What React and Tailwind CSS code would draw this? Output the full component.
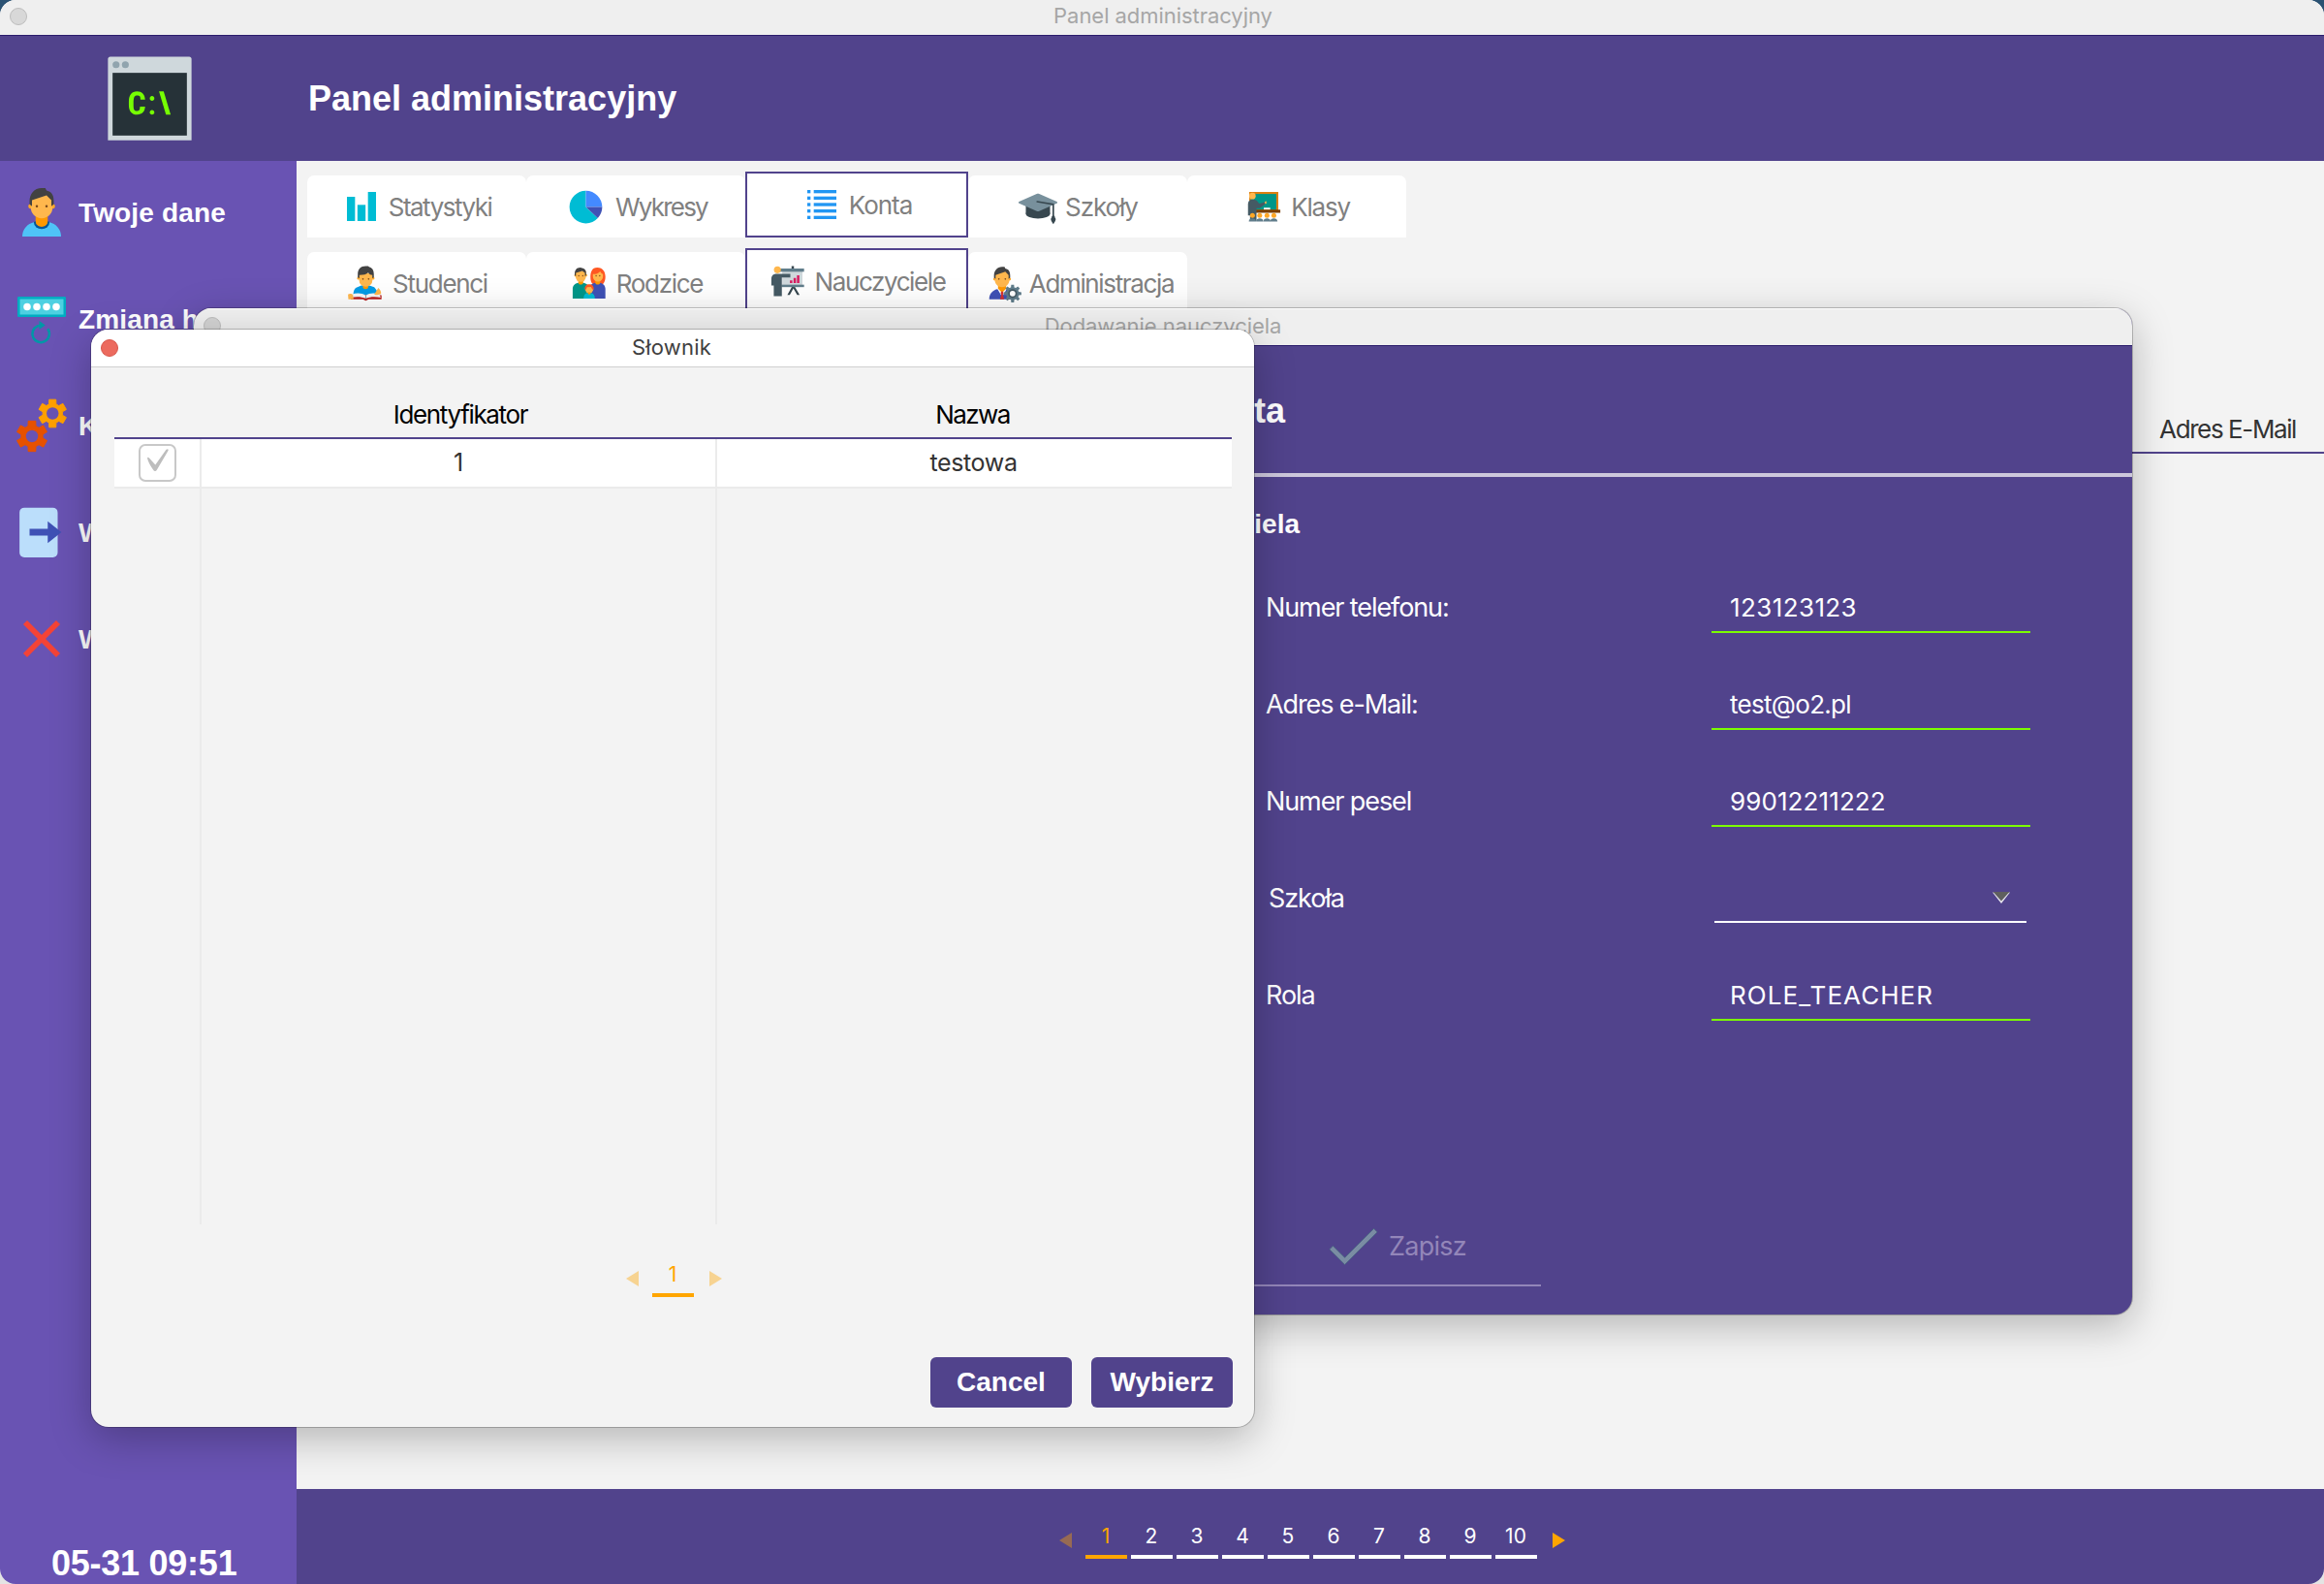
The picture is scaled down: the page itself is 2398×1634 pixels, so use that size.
import React from "react";
import { FcBarChart, FcPieChart, FcList, FcGraduationCap, FcCommandLine } from "react-icons/fc";

const gearPath = (cx, cy, outer, body, teeth, halfTip, halfBase) => {
  const pts = [];
  const step = (Math.PI * 2) / teeth;
  for (let i = 0; i < teeth; i++) {
    const a = i * step - Math.PI / 2;
    [
      [body, -halfBase],
      [outer, -halfTip],
      [outer, halfTip],
      [body, halfBase],
    ].forEach(([r, d]) => pts.push(`${(cx + r * Math.cos(a + d)).toFixed(2)},${(cy + r * Math.sin(a + d)).toFixed(2)}`));
  }
  return `M${pts.join("L")}Z`;
};

const Svg = ({ size = 40, children, className = "" }) => (
  <svg width={size} height={size} viewBox="0 0 48 48" className={"shrink-0 " + className}>
    {children}
  </svg>
);

const Head = () => (
  <>
    <circle fill="#FFA726" cx="33" cy="19" r="2" />
    <circle fill="#FFA726" cx="15" cy="19" r="2" />
    <path fill="#FFB74D" d="M33,13c0-7.6-18-5-18,0c0,1.1,0,5.9,0,7c0,5,4,9,9,9s9-4,9-9C33,18.9,33,14.1,33,13z" />
    <path fill="#424242" d="M24,4c-6.1,0-10,4.9-10,11c0,0.8,0,2.3,0,2.3l2,1.7v-5l12-4l4,4v5l2-1.7c0,0,0-1.5,0-2.3c0-4-1-8-6-9l-1-2H24z" />
    <circle fill="#784719" cx="28" cy="19" r="1" />
    <circle fill="#784719" cx="20" cy="19" r="1" />
  </>
);

const UserIcon = () => (
  <Svg size={60}>
    <path fill="#4FC3F7" d="M30,32h-12C12,33.500,8,38,8,44h32C40,38,36,33.500,30,32z" />
    <path fill="#01579B" d="M17.500,32a6.500,5.800 0 0 0 13,0l-2-1h-9z" />
    <path fill="#FF9800" d="M19,25h10v6.500a5,4.500 0 0 1-10,0z" />
    <Head />
  </Svg>
);

const PasswordIcon = () => (
  <Svg size={60}>
    <rect x="4" y="5.600" width="40" height="16.800" rx="1" fill="#00ACC1" />
    <rect x="6" y="7.600" width="36" height="12.800" fill="#4DD0E1" />
    {[12, 20, 28, 36].map((x) => (
      <circle key={x} cx={x} cy="14" r="3" fill="#fff" />
    ))}
    <path d="M29,32.200A7,7 0 1 1 20.500,29.900L24,29.200" fill="none" stroke="#0097A7" strokeWidth="2" />
    <path d="M22,25.600v7l5-3.500z" fill="#0097A7" />
  </Svg>
);

const GearsIcon = () => (
  <Svg size={60}>
    <path d={gearPath(16, 32.8, 12.9, 9, 6, 0.24, 0.36)} fill="#E65100" stroke="#E65100" strokeWidth="0.800" strokeLinejoin="round" />
    <circle cx="16" cy="32.800" r="5" fill="#6953B3" />
    <path d={gearPath(33, 14, 11.8, 8.2, 6, 0.24, 0.36)} fill="#FFA000" stroke="#FFA000" strokeWidth="0.800" strokeLinejoin="round" />
    <circle cx="33" cy="14" r="5" fill="#6953B3" />
  </Svg>
);

const ExportIcon = () => (
  <Svg size={60}>
    <rect x="5.700" y="3.700" width="31.500" height="41" rx="4" fill="#BBDEFB" />
    <path d="M14,21.200h15v-6.200l11.300,9l-11.300,9v-6.200h-15z" fill="#3F51B5" />
  </Svg>
);

const CloseIcon = () => (
  <Svg size={60}>
    <path d="M10.400,10.400L37.600,37.600M37.600,10.400L10.400,37.600" stroke="#F44336" strokeWidth="4.600" />
  </Svg>
);

const StudentIcon = () => (
  <Svg>
    <path fill="#039BE5" d="M19,27l-7,3c-2,2-3,5-3,9h31c-1-5-3-8-5-10l-6-2z" />
    <path fill="#FF9800" d="M21,24h6.500v6c-2,2-4.500,2-6.500,0z" />
    <circle fill="#FFA726" cx="15.500" cy="18" r="1.800" />
    <circle fill="#FFA726" cx="33.500" cy="18" r="1.800" />
    <path fill="#FFB74D" d="M32.800,12h-16.600v8a8.300,8.600 0 0 0 16.600,0z" />
    <path fill="#424242" d="M24.500,3c-6.500,0-9.900,4-9.900,10v4l2,1v-4c5,0,9-1,11-3c1,2,3,3,5,3v4l1.900-1v-4c0-5-2-8-6-9l-1-1z" />
    <circle fill="#784719" cx="21" cy="19" r="1" />
    <circle fill="#784719" cx="28" cy="19" r="1" />
    <path fill="#B71C1C" d="M6,39h38v5h-16l-3.500,2l-3.500-2h-15z" />
    <path fill="#F5F5F5" d="M7,38c6-2,13-2,17.500,1.500c4.500-3.500,11-3.500,17-1.500l1.500,4c-6-1.500-13-1.500-18.500,1c-6-2.500-12-2.500-18.500-1z" />
    <path fill="#78909C" d="M24,39.500h1v4h-1z" />
    <path fill="#FFB74D" d="M2.500,38c2-1.500,5-1,6,.5l1,5.500h-6.500zM35,38l5-8c2,2,3.500,4,3.500,7c-2,2-6,2-8.500,1z" />
  </Svg>
);

const FamilyIcon = () => (
  <Svg className="ml-px">
    <path fill="#009688" d="M3.500,43.200v-12c0-5,4-7,7-7.500h6c4,.5,7.500,3,7.500,8v11.500z" />
    <path fill="#FF9800" d="M10.500,20h6v4c-1,2.500-5,2.500-6,0z" />
    <circle fill="#FFA726" cx="7" cy="14.500" r="1.500" />
    <circle fill="#FFA726" cx="20" cy="14.500" r="1.500" />
    <path fill="#FFB74D" d="M7,9h13v7a6.500,6.500 0 0 1-13,0z" />
    <path fill="#424242" d="M13,4.800c-5,0-7,3.500-7,8v1.700l1.500,1v-4l8-2.500l3.200,2.500v4l1.500-1v-2c0-3.500-1-6-4-6.700z" />
    <path fill="#FF5722" d="M34,4.800c-7,0-8.500,6-8.500,12c0,4,1,7,3,8.500h12.500c2-2,3-5,3-9c0-6-3-11.500-10-11.500z" />
    <path fill="#3F51B5" d="M24,43.200v-11.500c0-5,3.500-7.500,7.500-8h6c3,.5,6.500,3,6.500,8v11.500z" />
    <path fill="#FF9800" d="M31.500,20h6v4c-1,2.500-5,2.500-6,0z" />
    <path fill="#FFB74D" d="M28.500,13c4,0,7-1,9-3.500c1,2,2.500,3,3.500,3.500v3a6.200,6.200 0 0 1-12.500,0z" />
    {[11, 16, 32.5, 37].map((x) => (
      <circle key={x} cx={x} cy="15" r="0.800" fill="#784719" />
    ))}
    <path fill="#00BCD4" d="M17,43.200c0-4,1.500-6.500,5-7h4c3.500.5,5,3,5,7z" />
    <circle cx="24" cy="31.500" r="5" fill="#FFB74D" />
    <path fill="#FF5722" d="M24,25.600c-4,0-5.600,2.500-5.600,6l1.600.6l1.200-3l5-.5l1.800,3.500l1.600-.6c0-3.500-1.600-6-5.600-6z" />
    <path fill="#FF9800" d="M22.500,35.500h3v2.500h-3z" />
  </Svg>
);

const TrainingIcon = () => (
  <Svg>
    <path fill="#37474F" d="M28.500,5.500h3v3h-3zM29,31h3.500l6,10h-3l-4.700-8l-4.500,8h-3z" />
    <rect x="17" y="12" width="25" height="17" fill="#CFD8DC" />
    <rect x="14" y="8.400" width="30" height="4" fill="#607D8B" />
    <rect x="16" y="28.400" width="28" height="3" fill="#607D8B" />
    <path fill="#D81B60" d="M26.500,23h3v3.500h-3zM31,20h3v6.500h-3zM35.200,16.800h3v9.700h-3z" />
    <path fill="#455A64" d="M10,15h17v4.500h-10.500v23h-10v-13h-3v-8c0-4,2-6.500,6.500-6.500z" />
    <circle cx="11" cy="10" r="4.300" fill="#FFB74D" />
  </Svg>
);

const AdminIcon = () => (
  <Svg className="ml-px">
    <path fill="#3F51B5" d="M18,31.500c-6,1.500-10,6-10,12.500h32c0-6.500-4-11-10-12.500z" />
    <path fill="#fff" d="M18,31l6,10l6-10z" />
    <path fill="#FF9800" d="M19,25h10v6l-5,5l-5-5z" />
    <path fill="#D32F2F" d="M24,34l2,2l-1,2l1.500,6h-5l1.500-6l-1-2z" />
    <Head />
    <path d={gearPath(37, 37, 11, 8, 8, 0.16, 0.26)} fill="#607D8B" />
    <circle cx="37" cy="37" r="5.500" fill="#455A64" />
    <circle cx="37" cy="37" r="3.500" fill="#fff" />
  </Svg>
);

const ClassIcon = () => (
  <Svg className="ml-px">
    <rect x="6" y="6" width="36" height="23" fill="#DB7F10" />
    <rect x="8" y="8.500" width="31.500" height="19.500" fill="#009688" />
    <rect x="10" y="32" width="30" height="7" fill="#fff" />
    <rect x="24" y="25.500" width="8" height="2.500" fill="#fff" />
    <rect x="14" y="28" width="30.500" height="3.800" fill="#7B3F00" />
    <path fill="#455A64" d="M9,15.500h3c4,0,5,4,7,5l6-2l1,2.500l-7,5h-4v16h-8v-7h-2.500v-14c0-3,2-5.500,4.500-5.500z" />
    <path fill="#FFB74D" d="M25,18.500l2-1.500l.500,3l-1.500,1z" />
    <circle cx="10" cy="11" r="4" fill="#FFB74D" />
    {[10, 19, 28, 36.5].map((x) => (
      <g key={x}>
        <circle cx={x} cy="35" r="3" fill="#FFA726" />
        <path d={`M${x - 4.5},42.500c0-5,9-5,9,0z`} fill="#607D8B" />
      </g>
    ))}
  </Svg>
);

const tabsTop = [
  { label: "Statystyki", icon: <FcBarChart size={40} />, track: "tracking-[-1.5px]" },
  { label: "Wykresy", icon: <FcPieChart size={45} />, track: "tracking-[-1.8px]" },
  { label: "Konta", icon: <FcList size={40} className="ml-px" />, track: "tracking-[-1px]" },
  { label: "Szkoły", icon: <FcGraduationCap size={40} className="ml-px" />, track: "tracking-[-1.1px]" },
  { label: "Klasy", icon: <ClassIcon />, track: "tracking-[-1.2px]" },
];
const tabsBottom = [
  { label: "Studenci", icon: <StudentIcon />, track: "tracking-[-1.3px]" },
  { label: "Rodzice", icon: <FamilyIcon />, track: "tracking-[-1.3px]" },
  { label: "Nauczyciele", icon: <TrainingIcon />, track: "tracking-[-1.4px]" },
  { label: "Administracja", icon: <AdminIcon />, track: "tracking-[-1.35px]" },
];

function Tabs({ items, active }) {
  return (
    <div className="flex h-[68px] items-end">
      {items.map((t) => (
        <div
          key={t.label}
          className={
            "flex items-center justify-center gap-2 bg-white text-[26px] whitespace-nowrap text-[#808080] " +
            (t.label === active ? "h-[68px] w-[230px] border-2 border-[#51438c]" : "h-[64px] w-[226px] rounded-t-[7px]")
          }
        >
          {t.icon}
          <span className={t.track}>{t.label}</span>
        </div>
      ))}
    </div>
  );
}

const Tri = ({ dir, className }) => (
  <svg width="13" height="16" viewBox="0 0 13 16" className={"mt-1.5 shrink-0 " + className}>
    <path d={dir === "left" ? "M13 0V16L0 8Z" : "M0 0V16L13 8Z"} fill="#FFA500" />
  </svg>
);

function Pager({ count, idle, prev, next }) {
  return (
    <div className="flex items-center justify-center">
      <Tri dir="left" className={"mr-3.5 " + prev} />
      <div className="flex gap-1">
        {Array.from({ length: count }, (_, i) => (
          <div
            key={i}
            className={
              "h-[44px] w-[43px] border-b-4 text-center text-[21px] leading-[41px] " +
              (i === 0 ? "border-[#FFA500] text-[#FFA500]" : idle)
            }
          >
            {i + 1}
          </div>
        ))}
      </div>
      <Tri dir="right" className={"ml-4 " + next} />
    </div>
  );
}

const menu = [
  { label: "Twoje dane", icon: <UserIcon /> },
  { label: "Zmiana hasła", icon: <PasswordIcon /> },
  { label: "Konfiguracja", icon: <GearsIcon /> },
  { label: "Wyloguj", icon: <ExportIcon /> },
  { label: "Wyjście", icon: <CloseIcon /> },
];

const fields = [
  { label: "Numer telefonu:", value: "123123123", track: "tracking-[0.4px]" },
  { label: "Adres e-Mail:", value: "test@o2.pl", track: "tracking-[-0.7px]" },
  { label: "Numer pesel", value: "99012211222", track: "tracking-[0.1px]" },
  { label: "Szkoła", select: true },
  { label: "Rola", value: "ROLE_TEACHER", track: "tracking-[1.05px]" },
];

const windowShadow = "shadow-[0_0_0_1px_rgba(0,0,0,0.22),0_12px_42px_rgba(0,0,0,0.26)]";

function TeacherForm() {
  return (
    <section className={"absolute top-[318px] left-[200px] flex h-[1038px] w-[2000px] flex-col overflow-hidden rounded-[18px] bg-[#51438c] " + windowShadow}>
      <div className="relative flex h-[39px] shrink-0 items-center justify-center border-b border-[#2a1c6b] bg-[#efefef] pb-0.5 text-[22px] tracking-[-0.05px] text-[#a6a6a6] shadow-[inset_0_1px_0_#fff]">
        <span className="absolute top-[9px] left-[10px] size-[18px] rounded-full border border-[#bcbcbc] bg-[#d3d3d3]" />
        Dodawanie nauczyciela
      </div>
      <div className="flex h-[135px] shrink-0 items-center border-b-4 border-[#cdc8dc] pt-0.5">
        <h2 className="w-[1126px] text-right font-['Liberation_Sans',sans-serif] text-[36px] font-bold text-white">Dane konta</h2>
      </div>
      <h3 className="mt-[29px] w-[1141px] text-right font-['Liberation_Sans',sans-serif] text-[28px] leading-[40px] font-bold text-white">Dane nauczyciela</h3>
      <div className="mt-4 ml-[1106px] flex flex-col">
        {fields.map((f) => (
          <div key={f.label} className="flex h-[100px] items-center text-white">
            <div className={"w-[460px] text-[27px] tracking-[-1.1px] " + (f.select ? "pl-[3px]" : "")}>{f.label}</div>
            {f.select ? (
              <div className="ml-[3px] flex h-[50px] w-[322px] items-center justify-end border-b-2 border-white pr-[17px]">
                <svg width="18" height="12" viewBox="0 0 18 12">
                  <path d="M0 0.500H18L9 12Z" fill="#e8e6f0" />
                  <path d="M0.500 0H17.500L9 9.500Z" fill="#5f5f5f" />
                </svg>
              </div>
            ) : (
              <div className={"flex h-[52px] w-[329px] items-center border-b-2 border-[#7cfc00] pl-[19px] text-[26px] " + f.track}>{f.value}</div>
            )}
          </div>
        ))}
      </div>
      <div className="mt-[170px] ml-[1088px] flex h-[80px] w-[302px] items-center justify-center gap-1.5 border-b-2 border-[#9386b9] pt-px pl-px text-[27px] text-[#9386b9]">
        <svg width="61" height="61" viewBox="0 0 48 48" className="mb-2 shrink-0">
          <path d="M40.600 12.100L17 35.700L7.400 26.100L4.600 29L17 41.300L43.400 14.900Z" fill="#7a8ca3" stroke="#4b6484" strokeWidth="0.700" />
        </svg>
        <span className="tracking-[-0.7px]">Zapisz</span>
      </div>
    </section>
  );
}

function Dictionary() {
  return (
    <section className={"absolute top-[340px] left-[94px] flex h-[1132px] w-[1200px] flex-col overflow-hidden rounded-[18px] bg-[#f3f3f3] " + windowShadow}>
      <div className="relative flex h-[39px] shrink-0 items-center justify-center border-b border-[#cfcfcf] bg-white pr-0.5 pb-0.5 text-[22px] tracking-[0.2px] text-[#404040]">
        <span className="absolute top-[10px] left-[10px] size-[18px] rounded-full border border-[#d8564b] bg-[#ec6a5e]" />
        Słownik
      </div>
      <div className="mt-6 mr-[23px] ml-6 flex h-[860px] shrink-0 flex-col text-center">
        <div className="flex h-[50px] shrink-0 border-b-2 border-[#51438c] text-[26px] leading-[49px] text-black">
          <div className="w-[90px]" />
          <div className="w-[532px] pl-0.5 tracking-[-1.35px]">Identyfikator</div>
          <div className="flex-1 pr-1 tracking-[-1.6px]">Nazwa</div>
        </div>
        <div className="flex h-[51px] shrink-0 border-b-2 border-[#ebebeb] bg-white text-[25px] leading-[49px] text-[#333]">
          <div className="flex w-[90px] items-center justify-center border-r-2 border-[#ebebeb]">
            <span className="mb-px flex size-[39px] items-center justify-center rounded-[7px] border-2 border-[#c8c8c8] bg-white">
              <svg width="22" height="24" viewBox="0 0 22 24" className="mb-1 ml-0.5">
                <path d="M0 9.500Q0.500 8 2 9.500L8.300 16.500L19.500 0.800Q22 -0.500 21.600 1.800L10 21.500Q8 24.500 6 21.500Q1 14.500 0 9.500Z" fill="#bdbdbd" />
              </svg>
            </span>
          </div>
          <div className="w-[532px] border-r-2 border-[#ebebeb]">1</div>
          <div className="flex-1 pr-0.5 tracking-[-0.35px]">testowa</div>
        </div>
        <div className="flex flex-1">
          <div className="w-[90px] border-r-2 border-[#ebebeb]" />
          <div className="w-[532px] border-r-2 border-[#ebebeb]" />
        </div>
      </div>
      <div className="mt-[31px] pl-0.5">
        <Pager count={1} idle="" prev="opacity-40" next="opacity-40" />
      </div>
      <div className="mt-[62px] mr-[22px] flex justify-end gap-5 font-['Liberation_Sans',sans-serif] text-[28px] font-bold text-white">
        <button className="h-[52px] w-[146px] rounded-[6px] bg-[#51438c] pb-px">Cancel</button>
        <button className="h-[52px] w-[146px] rounded-[6px] bg-[#51438c] pb-px">Wybierz</button>
      </div>
    </section>
  );
}

export default function App() {
  return (
    <div className="relative h-[1634px] w-[2398px] overflow-hidden bg-[linear-gradient(#2b5273,#2b5273_50%,#e4e4e4_50%)] font-[Inter,sans-serif]">
      <div className="flex h-full flex-col overflow-hidden rounded-[16px] bg-[#f3f3f3]">
        <div className="relative flex h-[37px] shrink-0 items-center justify-center border-b border-[#2a1c6b] bg-[#efefef] pb-1 pl-0.5 text-[22px] tracking-[-0.05px] text-[#a6a6a6]">
          <span className="absolute top-2 left-[10px] size-[18px] rounded-full border border-[#bcbcbc] bg-[#d8d8d8]" />
          Panel administracyjny
        </div>
        <header className="flex h-[129px] shrink-0 items-center bg-[#51438c]">
          <div className="flex w-[318px] justify-center pr-[9px]">
            <FcCommandLine size={115} />
          </div>
          <h1 className="pt-px font-['Liberation_Sans',sans-serif] text-[36px] font-bold text-white">Panel administracyjny</h1>
        </header>
        <div className="flex flex-1">
          <aside className="flex w-[306px] flex-col justify-between bg-[#6953b3] font-['Liberation_Sans',sans-serif] font-bold text-white">
            <nav className="flex flex-col gap-[50px] pt-[23px] pl-[13px]">
              {menu.map((m) => (
                <div key={m.label} className="flex h-[60px] items-center gap-2 text-[28px] tracking-[0.15px] whitespace-nowrap">
                  {m.icon}
                  <span className="pt-0.5">{m.label}</span>
                </div>
              ))}
            </nav>
            <div className="pl-[53px] text-[36px] leading-[42px] tracking-[-0.25px]">05-31 09:51</div>
          </aside>
          <main className="flex flex-1 flex-col justify-between">
            <div className="pt-[11px]">
              <div className="flex flex-col gap-[11px] pl-[11px]">
                <Tabs items={tabsTop} active="Konta" />
                <Tabs items={tabsBottom} active="Nauczyciele" />
              </div>
              <div className="mt-[94px] flex h-[50px] items-center justify-end border-b-2 border-[#51438c] pr-[29px] text-[26px] tracking-[-1.4px] text-[#333]">
                Adres E-Mail
              </div>
            </div>
            <footer className="h-[98px] bg-[#51438c] pt-7 pl-[3px]">
              <Pager count={10} idle="border-white text-white" prev="opacity-40" next="" />
            </footer>
          </main>
        </div>
      </div>
      <TeacherForm />
      <Dictionary />
    </div>
  );
}
